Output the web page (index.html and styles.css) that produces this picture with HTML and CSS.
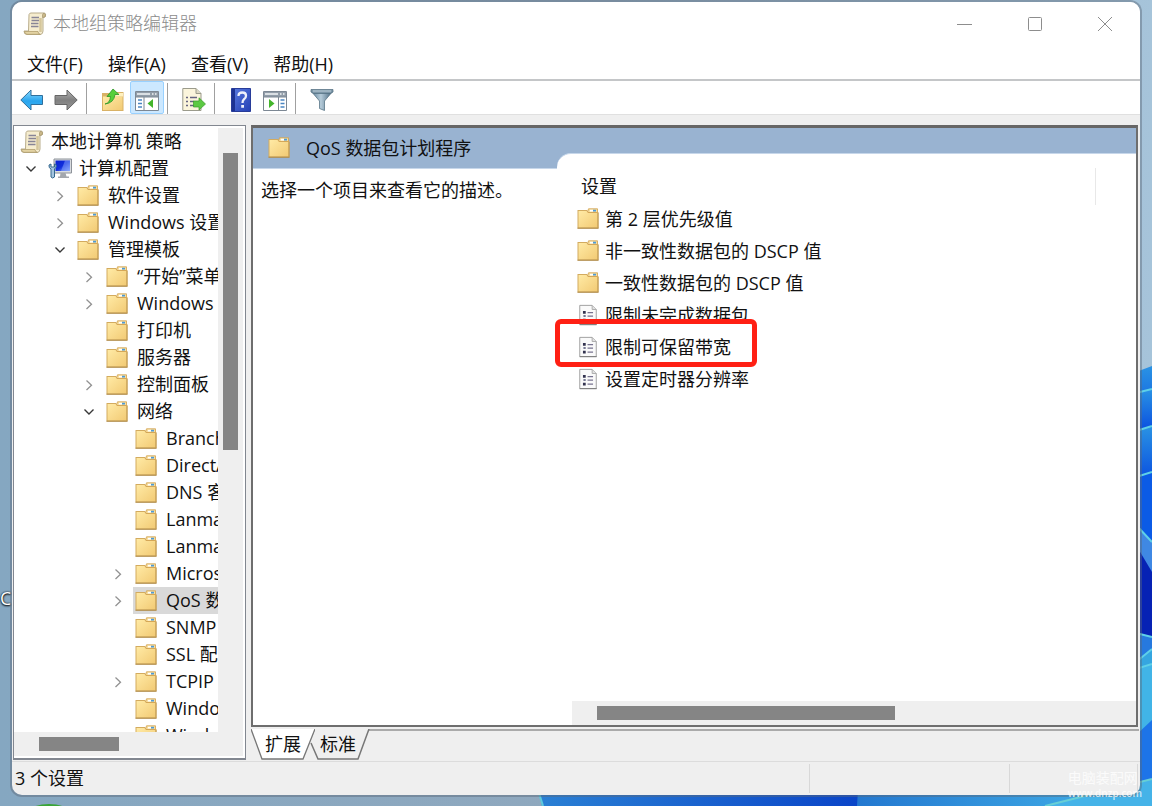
FILE: index.html
```html
<!DOCTYPE html>
<html lang="zh-CN">
<head>
<meta charset="utf-8">
<title>本地组策略编辑器</title>
<link rel="stylesheet" href="styles.css">
</head>
<body>
<svg class="defs" aria-hidden="true">
  <defs>
    <linearGradient id="gFolder" x1="0" y1="0" x2="1" y2="1"><stop offset="0" stop-color="#ffeaa5"/><stop offset="1" stop-color="#f2ca74"/></linearGradient>
    <linearGradient id="gBlue" x1="0" y1="0" x2="0" y2="1"><stop offset="0" stop-color="#8fdcff"/><stop offset=".55" stop-color="#2aa5ee"/><stop offset="1" stop-color="#3fb2f2"/></linearGradient>
    <linearGradient id="gGrey" x1="0" y1="0" x2="0" y2="1"><stop offset="0" stop-color="#b5b5b5"/><stop offset=".5" stop-color="#808080"/><stop offset="1" stop-color="#979797"/></linearGradient>
    <linearGradient id="gHelp" x1="0" y1="0" x2="1" y2="1"><stop offset="0" stop-color="#5a7be0"/><stop offset="1" stop-color="#2440b4"/></linearGradient>
    <linearGradient id="gScreen" x1="0" y1="0" x2="1" y2="1"><stop offset="0" stop-color="#0a1fd0"/><stop offset=".5" stop-color="#1130dd"/><stop offset="1" stop-color="#8fb4ff"/></linearGradient>
    <linearGradient id="gFilter" x1="0" y1="0" x2="1" y2="0"><stop offset="0" stop-color="#5d7f97"/><stop offset=".45" stop-color="#b5cbd9"/><stop offset="1" stop-color="#3f5f77"/></linearGradient>
    <symbol id="folder" viewBox="0 0 22 22">
      <path d="M.5 2H10L11.500 4H21.500V20.500H.5z" fill="#d3ab5f"/>
      <path d="M11.500 .8H20.500V4.500H10.500z" fill="#f7dfa0" stroke="#d0a04c" stroke-width=".8"/>
      <path d="M13 1.800H16V3.500H13z" fill="#fff"/><path d="M16 1.800H19V3.500H16z" fill="#4c9ad8"/>
      <path d="M1.500 3H9.500L11 5H20.500V19.500H1.500z" fill="url(#gFolder)"/>
      <path d="M.5 20.200H21.500" stroke="#ab8748"/>
      <path d="M21 5V20" stroke="#c09a52"/>
    </symbol>
    <symbol id="scroll" viewBox="0 0 24 24">
      <path d="M6 2.500Q6.500 1 8 1H21.500Q23 1.500 22.500 4.500L20 5.500V19Q20 22 17.500 22.500H4Q1 22.500 1 19H5.500z" fill="#f6edcf" stroke="#b9ad8c"/>
      <path d="M19.500 5.500V3Q19.500 1.200 21.500 1.200Q23.200 2.500 22 5z" fill="#cdbb8b" stroke="#a4946c" stroke-width=".7"/>
      <path d="M1.500 19.500H15Q15 22 17.500 22.300H4Q1.500 22 1.500 19.500z" fill="#e3d3a3" stroke="#aa9766" stroke-width=".7"/>
      <path d="M17.500 6V20" stroke="#d5c69b" stroke-width="2.500"/>
      <path d="M8.500 5.500H16M8.500 8.500H16M8 11.500H15.500M8 14.500H15.500" stroke="#888596" stroke-width="1.300"/>
    </symbol>
    <symbol id="computer" viewBox="0 0 24 24">
      <path d="M6 2H23.500V16H6z" fill="#d9dce0" stroke="#8d9299"/>
      <path d="M7.500 3.500H22V14H7.500z" fill="url(#gScreen)"/><path d="M17 3.500H22V14H13z" fill="#7f9dfb" opacity=".55"/>
      <path d="M12.500 16H17.500L18.500 19.500H21V21H10V19.500H12z" fill="#a3a7ad"/>
      <path d="M1 8Q.5 11 3 12V20Q4.500 22 6.500 20V12Q9 10.500 8 7.500L6.500 7V10H3V7z" fill="#a5c5df" stroke="#35688f"/>
    </symbol>
    <symbol id="policy" viewBox="0 0 22 24">
      <path d="M2 1.500H15.500L20 6V22.500H2z" fill="#fafafa" stroke="#999"/>
      <path d="M15.500 1.500V6H20" fill="#e1e1e1" stroke="#aaa"/>
      <path d="M2 22.500H20.500" stroke="#777"/>
      <path d="M5.500 7.500H8.500V10.500H5.500zM5.500 16H8.500V19H5.500z" fill="#33334f"/><path d="M6 12H8.500V14.200H6z" fill="#777a94"/>
      <path d="M10.500 9.500H16.500M10.500 13.200H16.500M10.500 17.500H16.500" stroke="#77738f" stroke-width="1.300"/>
    </symbol>
    <symbol id="closed" viewBox="0 0 12 12"><path d="M3.500 1.500L8.500 6.200L3.500 11" fill="none" stroke="#929292" stroke-width="1.300"/></symbol>
    <symbol id="open" viewBox="0 0 12 12"><path d="M1.500 3.500L6 8L10.500 3.500" fill="none" stroke="#383838" stroke-width="1.400"/></symbol>
  </defs>
</svg>

<svg class="wallpaper" viewBox="0 0 1152 806" preserveAspectRatio="none" aria-hidden="true">
  <defs>
    <linearGradient id="w1" x1="0" y1="0" x2="1" y2="0"><stop offset="0" stop-color="#85a7c1"/><stop offset=".5" stop-color="#8fa8be"/><stop offset="1" stop-color="#a6c4da"/></linearGradient>
    <linearGradient id="w2" x1="0" y1="0" x2="0" y2="1"><stop offset="0" stop-color="#2a93e4"/><stop offset="1" stop-color="#0a50e0"/></linearGradient>
    <linearGradient id="w3" x1="0" y1="0" x2="1" y2="0"><stop offset="0" stop-color="#2a80d4"/><stop offset="1" stop-color="#0a45c8"/></linearGradient>
    <linearGradient id="w4" x1="0" y1="0" x2="1" y2="0"><stop offset="0" stop-color="#2378d0"/><stop offset="1" stop-color="#45b5ea"/></linearGradient>
  </defs>
  <path d="M0 0H1152V806H0z" fill="url(#w1)"/>
  <path d="M1136 372L1152 366V430H1136z" fill="url(#w2)"/>
  <path d="M1136 393L1152 389V430H1136z" fill="url(#w2)"/>
  <path d="M1136 431L1152 426V480H1136z" fill="url(#w2)"/>
  <path d="M1136 477L1152 472V560H1136z" fill="#0b5be6"/>
  <path d="M1136 525L1152 542V580H1136z" fill="#3f88e4"/>
  <path d="M1136 545L1152 572V640H1136z" fill="#0622b4"/>
  <path d="M1136 633L1152 637V665H1136z" fill="#2679df"/>
  <path d="M1136 662L1152 649V806H1136z" fill="#35a6e0"/>
  <path d="M1136 669Q1146 668 1152 664V740H1136z" fill="#41b4e7"/>
  <path d="M1136 735L1152 720V806H1136z" fill="#1d74e8"/>
  <path d="M1136 393L1152 389M1136 431L1152 426M1136 477L1152 472M1136 525L1152 542M1136 633L1152 637M1136 662L1152 649M1136 669L1152 664" fill="none" stroke="#5fd0e8" stroke-width="2"/>
  <path d="M538 790H858V806H542z" fill="url(#w3)"/>
  <path d="M538 790L543 806" stroke="#5fc9dc" stroke-width="2"/>
  <path d="M858 790H1152V806H857z" fill="url(#w4)"/>
  <path d="M1045 806L1152 779V806z" fill="#45b3e8"/>
  <path d="M1045 806L1152 779" stroke="#68cfd5" stroke-width="2"/>
  <ellipse cx="49" cy="812" rx="20" ry="8" fill="#3aa537"/>
</svg>
<span class="desktop-label">C</span>

<main class="window">
  <header class="titlebar">
    <svg class="i24"><use href="#scroll"/></svg>
    <h1>本地组策略编辑器</h1>
    <div class="controls">
      <button aria-label="最小化"><svg class="i16" viewBox="0 0 16 16"><path d="M0 8.500H15"/></svg></button>
      <button aria-label="最大化"><svg class="i16" viewBox="0 0 16 16"><rect x="1.500" y="1.500" width="13" height="13" rx="1"/></svg></button>
      <button aria-label="关闭"><svg class="i16" viewBox="0 0 16 16"><path d="M1 1L15 15M15 1L1 15"/></svg></button>
    </div>
  </header>

  <nav class="menubar">
    <button>文件(F)</button><button>操作(A)</button><button>查看(V)</button><button>帮助(H)</button>
  </nav>

  <div class="toolbar" role="toolbar">
    <button aria-label="后退"><svg class="i24" viewBox="0 0 24 24"><path d="M.8 12L11 2V7.500H22.500V16.500H11V22z" fill="url(#gBlue)" stroke="#2f6f9c"/></svg></button>
    <button aria-label="前进"><svg class="i24" viewBox="0 0 24 24"><path d="M23.200 12L13 2V7.500H1V16.500H13V22z" fill="url(#gGrey)" stroke="#666"/></svg></button>
    <i class="sep"></i>
    <button aria-label="上一级"><svg class="i24" viewBox="0 0 24 24"><path d="M1 5H9L11 7L14 4H22.500V23H1z" fill="#d9b266"/><path d="M2 8.500H21.500V22H2z" fill="url(#gFolder)"/><path d="M14 5H22V8.500H12z" fill="#fff0bd"/><path d="M4 16Q9 15 9.500 8.500H6L12 1L18 6.500H14Q13 15 4 16z" fill="#56cf3a" stroke="#2b9626" stroke-width=".8"/></svg></button>
    <button class="on" aria-label="显示/隐藏控制台树" aria-pressed="true"><svg class="i24" viewBox="0 0 24 24"><path d="M.5 3.500H23.500V22.500H.5z" fill="#fff" stroke="#7d8894"/><path d="M1 4H23V9H1z" fill="#929da9"/><path d="M2 6H15M17 6H18.500M20 6H21.500" stroke="#f4f6f8" stroke-width="1.300"/><path d="M1 9H23M9 9V22" stroke="#7d8894"/><path d="M3 12H7M3 15.500H7M3 19H7" stroke="#4b86c2" stroke-width="1.700"/><path d="M18 11V20L12.500 15.500z" fill="#43b52c"/></svg></button>
    <i class="sep"></i>
    <button aria-label="导出列表"><svg class="i24" viewBox="0 0 24 24"><path d="M.8 .5H14L19 5.500V22.500H.8z" fill="#fbf5dc" stroke="#9b9b8c"/><path d="M14 .5V5.500H19" fill="#ddd9c5" stroke="#9b9b8c"/><path d="M4 9.500H6M4 13.500H6M4 17.500H6M8 9.500H15M8 13.500H12M8 17.500H12" stroke="#666481" stroke-width="1.400"/><path d="M23.500 16L17 9.800V13H11.500V19H17V22z" fill="#5cc943" stroke="#3a9a2b" stroke-width=".7"/></svg></button>
    <i class="sep"></i>
    <button aria-label="帮助"><svg class="i24" viewBox="0 0 24 24"><path d="M2.500 .5H21.500V23.500H2.500z" fill="url(#gHelp)" stroke="#283c99"/><path d="M3 1H6V23H3z" fill="#1c3292"/><path d="M9.500 8Q9.500 4.500 13.300 4.500Q17 4.500 17 7.800Q17 10 15 11.300Q13.500 12.400 13.500 15" fill="none" stroke="#eef1fb" stroke-width="2.300"/><path d="M12.200 17H15V19.800H12.200z" fill="#eef1fb"/></svg></button>
    <button aria-label="显示/隐藏操作窗格"><svg class="i24" viewBox="0 0 24 24"><path d="M.5 3.500H23.500V22.500H.5z" fill="#fff" stroke="#7d8894"/><path d="M1 4H23V9H1z" fill="#929da9"/><path d="M2 6H15M17 6H18.500M20 6H21.500" stroke="#f4f6f8" stroke-width="1.300"/><path d="M1 9H23M15.500 9V22" stroke="#7d8894"/><path d="M17.500 12H21.500M17.500 15.500H21.500M17.500 19H21.500" stroke="#4b86c2" stroke-width="1.700"/><path d="M6 11V20L11.500 15.500z" fill="#43b52c"/></svg></button>
    <i class="sep"></i>
    <button aria-label="筛选器"><svg class="i24" viewBox="0 0 24 24"><path d="M1 3L9.500 13V20.500L14.500 22.500V13L23 3z" fill="url(#gFilter)" stroke="#5b7688" stroke-width=".8"/><path d="M1 1.500H23V4L20.500 5.500H3.500L1 4z" fill="#7d97a8" stroke="#4e6a7d" stroke-width=".7"/><path d="M3 3H21" stroke="#bfd0db"/></svg></button>
  </div>

  <div class="workspace">
    <section class="tree-pane" aria-label="控制台树">
      <div class="tree-view">
        <ul class="tree">
          <li><div class="row root"><button class="node"><svg class="i24"><use href="#scroll"/></svg>本地计算机 策略</button></div>
          <div class="row"><button class="toggle" aria-label="折叠"><svg class="i12"><use href="#open"/></svg></button><button class="node"><svg class="i24"><use href="#computer"/></svg>计算机配置</button></div>
          <ul>
            <li class="row"><button class="toggle" aria-label="展开"><svg class="i12"><use href="#closed"/></svg></button><button class="node"><svg class="i22"><use href="#folder"/></svg>软件设置</button></li>
            <li class="row"><button class="toggle" aria-label="展开"><svg class="i12"><use href="#closed"/></svg></button><button class="node"><svg class="i22"><use href="#folder"/></svg>Windows 设置</button></li>
            <li><div class="row"><button class="toggle" aria-label="折叠"><svg class="i12"><use href="#open"/></svg></button><button class="node"><svg class="i22"><use href="#folder"/></svg>管理模板</button></div>
            <ul>
              <li class="row"><button class="toggle" aria-label="展开"><svg class="i12"><use href="#closed"/></svg></button><button class="node"><svg class="i22"><use href="#folder"/></svg>“开始”菜单</button></li>
              <li class="row"><button class="toggle" aria-label="展开"><svg class="i12"><use href="#closed"/></svg></button><button class="node"><svg class="i22"><use href="#folder"/></svg>Windows 组件</button></li>
              <li class="row leaf"><button class="node"><svg class="i22"><use href="#folder"/></svg>打印机</button></li>
              <li class="row leaf"><button class="node"><svg class="i22"><use href="#folder"/></svg>服务器</button></li>
              <li class="row"><button class="toggle" aria-label="展开"><svg class="i12"><use href="#closed"/></svg></button><button class="node"><svg class="i22"><use href="#folder"/></svg>控制面板</button></li>
              <li><div class="row"><button class="toggle" aria-label="折叠"><svg class="i12"><use href="#open"/></svg></button><button class="node"><svg class="i22"><use href="#folder"/></svg>网络</button></div>
              <ul>
                <li class="row leaf"><button class="node"><svg class="i22"><use href="#folder"/></svg>BranchCache</button></li>
                <li class="row leaf"><button class="node"><svg class="i22"><use href="#folder"/></svg>DirectAccess</button></li>
                <li class="row leaf"><button class="node"><svg class="i22"><use href="#folder"/></svg>DNS 客户端</button></li>
                <li class="row leaf"><button class="node"><svg class="i22"><use href="#folder"/></svg>Lanman</button></li>
                <li class="row leaf"><button class="node"><svg class="i22"><use href="#folder"/></svg>Lanman</button></li>
                <li class="row"><button class="toggle" aria-label="展开"><svg class="i12"><use href="#closed"/></svg></button><button class="node"><svg class="i22"><use href="#folder"/></svg>Microsoft</button></li>
                <li class="row"><button class="toggle" aria-label="展开"><svg class="i12"><use href="#closed"/></svg></button><button class="node selected"><svg class="i22"><use href="#folder"/></svg>QoS 数据包</button></li>
                <li class="row leaf"><button class="node"><svg class="i22"><use href="#folder"/></svg>SNMP</button></li>
                <li class="row leaf"><button class="node"><svg class="i22"><use href="#folder"/></svg>SSL 配置</button></li>
                <li class="row"><button class="toggle" aria-label="展开"><svg class="i12"><use href="#closed"/></svg></button><button class="node"><svg class="i22"><use href="#folder"/></svg>TCPIP</button></li>
                <li class="row leaf"><button class="node"><svg class="i22"><use href="#folder"/></svg>Windows</button></li>
                <li class="row leaf"><button class="node"><svg class="i22"><use href="#folder"/></svg>Windows</button></li>
              </ul></li>
            </ul></li>
          </ul></li>
        </ul>
        <div class="vbar"><div class="vthumb"></div></div>
      </div>
      <div class="hbar tree-hbar"><div class="thumb"></div></div>
    </section>

    <section class="result">
      <div class="details">
        <div class="description">
          <h2><svg class="i22"><use href="#folder"/></svg>QoS 数据包计划程序</h2>
          <p>选择一个项目来查看它的描述。</p>
        </div>
        <div class="settings">
          <div class="column-head"><h3>设置</h3></div>
          <ul class="items">
            <li><svg class="i22"><use href="#folder"/></svg>第 2 层优先级值</li>
            <li><svg class="i22"><use href="#folder"/></svg>非一致性数据包的 DSCP 值</li>
            <li><svg class="i22"><use href="#folder"/></svg>一致性数据包的 DSCP 值</li>
            <li><svg class="i22"><use href="#policy"/></svg>限制未完成数据包</li>
            <li class="marked"><svg class="i22"><use href="#policy"/></svg>限制可保留带宽</li>
            <li><svg class="i22"><use href="#policy"/></svg>设置定时器分辨率</li>
          </ul>
          <div class="hbar list-hbar"><div class="thumb"></div></div>
        </div>
      </div>
      <div class="tabs" role="tablist">
        <button class="tab" role="tab" aria-selected="true"><svg viewBox="0 0 64 31"><path d="M0 0L11 30H52L64 0" fill="#fff" stroke="#777" stroke-width="1.300"/></svg><span>扩展</span></button>
        <button class="tab second" role="tab" aria-selected="false"><svg viewBox="0 0 60 31"><path d="M1 14L8 30H48L59 0H6z" fill="#efefef"/><path d="M1 14L8 30H48L59 0" fill="none" stroke="#777" stroke-width="1.500"/></svg><span>标准</span></button>
        <div class="tabline"></div>
      </div>
    </section>
  </div>

  <footer class="status"><span>3 个设置</span><i></i><i></i></footer>
</main>
<div class="watermark"><b>电脑装配网</b><small>www.dnzp.com</small></div>
</body>
</html>
```

FILE: styles.css
```css
*, *::after { box-sizing: border-box; }
body {
  margin: 0;
  height: 100vh;
  padding: 2px 12px 11px;
  overflow: hidden;
  position: relative;
  background: #8aa9c3;
  color: #111;
  font: 18px/27px "Open Sans", "Noto Sans CJK SC", sans-serif;
}
button {
  border: 0;
  padding: 0;
  background: none;
  color: inherit;
  font: inherit;
  white-space: nowrap;
}
ul { margin: 0; padding: 0; list-style: none; }
h1, h2, h3, p { margin: 0; font: inherit; }
svg { display: block; flex: none; }
.defs { position: absolute; width: 0; height: 0; }
.wallpaper { position: absolute; inset: 0; width: 100%; height: 100%; }
.desktop-label {
  position: absolute;
  left: 0;
  top: 585px;
  color: #fff;
  text-shadow: 0 1px 2px #000, 0 0 2px #000;
}
.i12 { width: 12px; height: 12px; }
.i16 { width: 16px; height: 16px; }
.i22 { width: 22px; height: 22px; }
.i24 { width: 24px; height: 24px; }

.window {
  position: relative;
  height: 100%;
  display: flex;
  flex-direction: column;
  overflow: hidden;
  border-radius: 10px;
  background: #efefef;
  box-shadow: 0 0 0 2px rgba(90, 105, 120, .45);
}

.titlebar { display: flex; align-items: center; height: 43px; padding-left: 11px; background: #fff; }
.titlebar h1 { flex: 1; margin-left: 6px; color: #8c8c8c; font-weight: 300; }
.controls { display: flex; }
.controls button { width: 70px; height: 43px; display: grid; place-items: center; }
.controls svg { fill: none; stroke: #8d8d8d; stroke-width: 1; }

.menubar { display: flex; gap: 25px; height: 36px; padding: 4px 0 0 15px; background: #fff; border-bottom: 2px solid #c4c6c8; }

.toolbar { display: flex; height: 34px; padding: 0 3px; background: #fff; border-bottom: 1px solid #e0e0e0; }
.toolbar button { width: 34px; height: 33px; padding-top: 4px; display: grid; place-items: center; border: 1px solid transparent; }
.toolbar .on { background: #cce8ff; border-color: #99d1ff; border-radius: 2px; }
.sep { width: 1px; height: 31px; margin: 2px 9px 0 3px; background: #a0a0a0; }

.workspace { flex: 1; min-height: 0; display: flex; gap: 5px; padding: 10px 1px 0; }

.tree-pane {
  flex: 0 0 233px;
  min-width: 0;
  margin-bottom: 1px;
  display: flex;
  flex-direction: column;
  background: #fff;
  border: 1px solid #828790;
  border-bottom-width: 2px;
  padding: 2px 2px 2px 0;
}
.tree-view { flex: 1; min-height: 0; display: flex; overflow: hidden; }
.tree { flex: 1; min-width: 0; overflow: hidden; padding-left: 6px; }
.tree ul { padding-left: 29px; }
.row { display: flex; height: 27px; }
.leaf { padding-left: 22px; }
.toggle { flex: none; width: 22px; display: grid; place-items: center; }
.node { display: flex; align-items: center; gap: 7px; flex: 1; margin-left: 4px; padding-left: 2px; }
.node .i22 { margin-right: 2px; }
.root .node { margin-left: 0; padding-left: 0; }
.selected { background: #d9d9d9; }
.vbar { flex: none; width: 25px; padding: 25px 5px; background: #efefef; }
.vthumb { width: 15px; height: 297px; background: #858585; }
.hbar { height: 24px; padding: 5px 25px; background: #efefef; }
.hbar .thumb { height: 14px; background: #858585; }
.tree-hbar .thumb { width: 80px; }

.result { flex: 1; min-width: 0; display: flex; flex-direction: column; }
.details {
  flex: 1;
  min-height: 0;
  display: flex;
  background: linear-gradient(#99b3d1, #99b3d1) 0 0 / 100% 40px no-repeat #fff;
  border: 2px solid #6e6e6e;
  border-top: 3px solid #666;
  margin-right: 1px;
}
.description { flex: 0 0 304px; }
.description h2 { display: flex; align-items: center; gap: 16px; height: 41px; padding-left: 15px; border-bottom: 1px solid #c7d7ea; }
.description p { padding: 8px 8px 0; }
.settings {
  flex: 1;
  min-width: 0;
  margin-top: 25px;
  padding-left: 15px;
  display: flex;
  flex-direction: column;
  background: #fff;
  border-top: 1px solid #c7d7ea;
  border-top-left-radius: 14px;
}
.column-head { margin: 14px 40px 0 0; height: 37px; padding: 5px 9px; border-right: 1px solid #e8e8e8; }
.items { flex: 1; padding: 0 5px; margin-top: -2px; }
.items li { display: flex; align-items: center; gap: 6px; height: 32px; position: relative; }
.marked::after {
  content: "";
  position: absolute;
  left: -22px;
  top: -12px;
  width: 202px;
  height: 48px;
  border: 5px solid #ff2014;
  border-radius: 6px;
}
.list-hbar .thumb { width: 298px; }

.tabs { display: flex; height: 34px; padding-top: 2px; }
.tab { position: relative; width: 64px; height: 31px; }
.tab svg { width: 100%; height: 100%; }
.tab span { position: absolute; inset: 2px 0; }
.second { width: 60px; margin-left: -5px; }
.second span { left: -4px; }
.tabline { flex: 1; margin-left: -54px; height: 2px; background: #aaa; }

.status { height: 34px; display: flex; align-items: center; border-top: 1px solid #dcdcdc; padding: 2px 2px 2px 3px; }
.status span { flex: 1; }
.status i { align-self: stretch; width: 200px; border-left: 1px solid #d8d8d8; }
.status i:last-child { width: 129px; border-right: 1px solid #d8d8d8; }

.watermark {
  position: absolute;
  right: 10px;
  bottom: 6px;
  display: flex;
  flex-direction: column;
  color: rgba(255, 255, 255, .75);
  font-size: 14px;
  line-height: 16px;
}
.watermark b { font-weight: 400; }
.watermark small { font-size: 10px; line-height: 14px; font-weight: 600; }
```
